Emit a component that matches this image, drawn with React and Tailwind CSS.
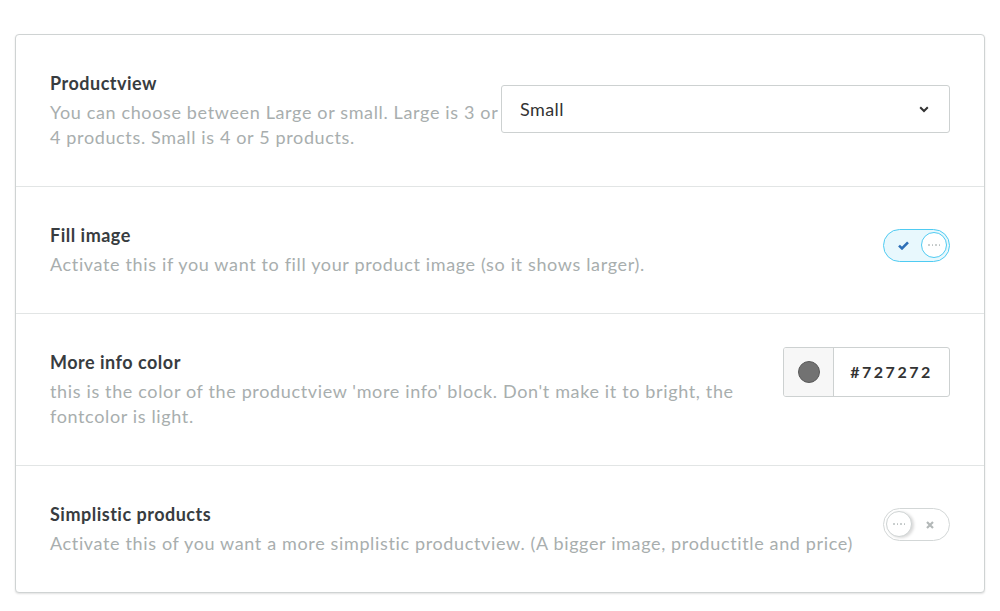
import React, { useState } from "react";

const font = { fontFamily: "Lato, 'Open Sans', sans-serif" };

function Dots() {
  return (
    <div className="flex items-center gap-[2px]">
      {[0, 1, 2, 3].map((i) => (
        <span key={i} className="block w-[1.5px] h-[1.5px] rounded-full bg-[#b9bfbf]" />
      ))}
    </div>
  );
}

function Toggle({ on, onClick }) {
  return (
    <button
      onClick={onClick}
      className={`relative w-[67px] h-[33px] rounded-full border-[1.5px] shrink-0 ${
        on ? "border-[#4fcbf2] bg-[#e8f8fd]" : "border-[#d3d7d7] bg-white"
      }`}
    >
      {on ? (
        <>
          <svg
            className="absolute left-[14px] top-[11px]"
            width="11"
            height="9"
            viewBox="0 0 11 9"
          >
            <path d="M1 4.6 L4 7.4 L10 1.4" fill="none" stroke="#2d6fb7" strokeWidth="2.6" />
          </svg>
          <span className="absolute right-[2px] top-[2px] w-[26px] h-[26px] rounded-full bg-white border-[1.5px] border-[#4fcbf2] flex items-center justify-center">
            <Dots />
          </span>
        </>
      ) : (
        <>
          <span className="absolute left-[2px] top-[2px] w-[26px] h-[26px] rounded-full bg-white border-[1.5px] border-[#cfd4d4] shadow-[2px_1px_3px_rgba(0,0,0,0.15)] flex items-center justify-center">
            <Dots />
          </span>
          <svg
            className="absolute right-[15px] top-[12px]"
            width="8"
            height="8"
            viewBox="0 0 8 8"
          >
            <path d="M1 1 L7 7 M7 1 L1 7" fill="none" stroke="#b3b8b8" strokeWidth="2.2" />
          </svg>
        </>
      )}
    </button>
  );
}

function Row({ title, children, last, control, wide }) {
  return (
    <div
      className={`flex px-[34px] py-[36px] ${wide ? "items-center" : "items-start gap-4"} ${
        last ? "" : "border-b border-[#e2e5e5]"
      }`}
    >
      <div className={wide ? "w-[451px] shrink-0" : "flex-1"}>
        <div className="text-[18px] leading-[24px] font-bold tracking-[0.5px] text-[#383c40]">
          {title}
        </div>
        <div className="mt-[5px] text-[18px] leading-[25px] tracking-[0.64px] text-[#a8aeae]">
          {children}
        </div>
      </div>
      {control}
    </div>
  );
}

export default function App() {
  const [fill, setFill] = useState(true);
  const [simple, setSimple] = useState(false);

  return (
    <div className="min-h-screen bg-white pt-[34px] px-[15px]" style={font}>
      <div className="w-[970px] rounded-[4px] border border-[#cfd3d3] bg-white shadow-[0_1px_2px_rgba(0,0,0,0.12)]">
        <Row
          title="Productview"
          wide
          control={
            <div className="flex-1 h-[48px] mt-[-3px] rounded-[3px] border border-[#cdd1d1] flex items-center justify-between pl-[18px] pr-[20px]">
              <span className="text-[18px] tracking-[0.4px] text-[#333]">Small</span>
              <svg width="10" height="7" viewBox="0 0 10 7">
                <path d="M1.2 1.3 L5 5 L8.8 1.3" fill="none" stroke="#333" strokeWidth="2" />
              </svg>
            </div>
          }
        >
          You can choose between Large or small. Large is 3 or 4 products. Small is 4 or 5
          products.
        </Row>

        <Row
          title="Fill image"
          control={
            <div className="mt-[6px]">
              <Toggle on={fill} onClick={() => setFill(!fill)} />
            </div>
          }
        >
          Activate this if you want to fill your product image (so it shows larger).
        </Row>

        <Row
          title="More info color"
          control={
            <div className="mt-[-3px] flex h-[50px] w-[167px] rounded-[3px] border border-[#cdd1d1] shrink-0 overflow-hidden">
              <div className="w-[50px] bg-[#f7f7f7] border-r border-[#cdd1d1] flex items-center justify-center">
                <span className="w-[22px] h-[22px] rounded-full bg-[#727272] border border-[#5a5a5a]" />
              </div>
              <div className="flex-1 flex items-center justify-center text-[16px] font-bold tracking-[2.5px] text-[#333]">
                #727272
              </div>
            </div>
          }
        >
          this is the color of the productview 'more info' block. Don't make it to bright, the
          fontcolor is light.
        </Row>

        <Row
          title="Simplistic products"
          last
          control={
            <div className="mt-[6px]">
              <Toggle on={simple} onClick={() => setSimple(!simple)} />
            </div>
          }
        >
          Activate this of you want a more simplistic productview. (A bigger image, productitle
          and price)
        </Row>
      </div>
    </div>
  );
}
